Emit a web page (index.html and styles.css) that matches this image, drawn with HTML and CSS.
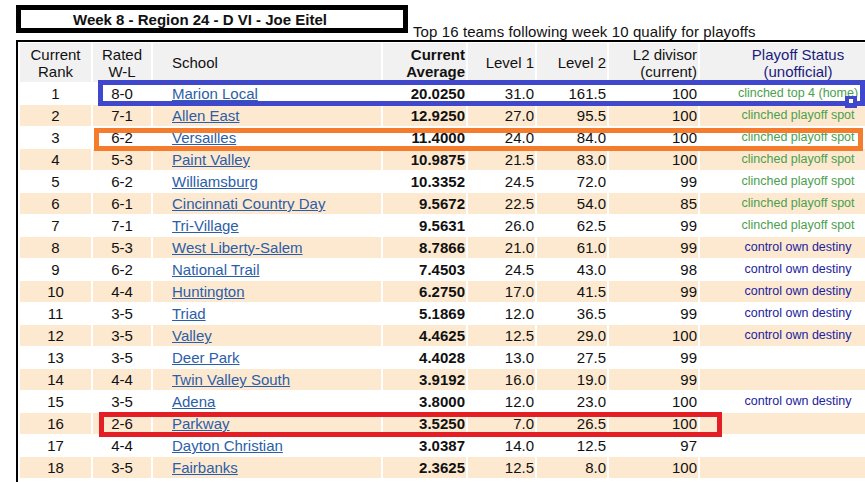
FILE: index.html
```html
<!DOCTYPE html>
<html>
<head>
<meta charset="utf-8">
<link rel="stylesheet" href="styles.css">
</head>
<body>
<div class="page">
  <div class="titlebar">
    <div class="titlebox">Week 8 - Region 24 - D VI - Joe Eitel</div>
    <div class="note">Top 16 teams following week 10 qualify for playoffs</div>
  </div>
  <table class="standings">
    <colgroup>
      <col class="c-rank"><col class="c-wl"><col class="c-school"><col class="c-avg"><col class="c-l1"><col class="c-l2"><col class="c-div"><col class="c-status">
    </colgroup>
    <thead>
      <tr>
        <th class="ctr">Current<br>Rank</th>
        <th class="ctr">Rated<br>W-L</th>
        <th class="school">School</th>
        <th class="num bold">Current<br>Average</th>
        <th class="num">Level 1</th>
        <th class="num">Level 2</th>
        <th class="num">L2 divisor<br>(current)</th>
        <th class="ctr status-head">Playoff Status<br>(unofficial)</th>
      </tr>
    </thead>
    <tbody>
      <tr><td class="ctr">1</td><td class="ctr">8-0</td><td class="school"><a href="#">Marion Local</a></td><td class="num bold">20.0250</td><td class="num">31.0</td><td class="num">161.5</td><td class="num">100</td><td class="ctr st clinch">clinched top 4 (home)</td></tr>
      <tr class="alt"><td class="ctr">2</td><td class="ctr">7-1</td><td class="school"><a href="#">Allen East</a></td><td class="num bold">12.9250</td><td class="num">27.0</td><td class="num">95.5</td><td class="num">100</td><td class="ctr st clinch">clinched playoff spot</td></tr>
      <tr><td class="ctr">3</td><td class="ctr">6-2</td><td class="school"><a href="#">Versailles</a></td><td class="num bold">11.4000</td><td class="num">24.0</td><td class="num">84.0</td><td class="num">100</td><td class="ctr st clinch">clinched playoff spot</td></tr>
      <tr class="alt"><td class="ctr">4</td><td class="ctr">5-3</td><td class="school"><a href="#">Paint Valley</a></td><td class="num bold">10.9875</td><td class="num">21.5</td><td class="num">83.0</td><td class="num">100</td><td class="ctr st clinch">clinched playoff spot</td></tr>
      <tr><td class="ctr">5</td><td class="ctr">6-2</td><td class="school"><a href="#">Williamsburg</a></td><td class="num bold">10.3352</td><td class="num">24.5</td><td class="num">72.0</td><td class="num">99</td><td class="ctr st clinch">clinched playoff spot</td></tr>
      <tr class="alt"><td class="ctr">6</td><td class="ctr">6-1</td><td class="school"><a href="#">Cincinnati Country Day</a></td><td class="num bold">9.5672</td><td class="num">22.5</td><td class="num">54.0</td><td class="num">85</td><td class="ctr st clinch">clinched playoff spot</td></tr>
      <tr><td class="ctr">7</td><td class="ctr">7-1</td><td class="school"><a href="#">Tri-Village</a></td><td class="num bold">9.5631</td><td class="num">26.0</td><td class="num">62.5</td><td class="num">99</td><td class="ctr st clinch">clinched playoff spot</td></tr>
      <tr class="alt"><td class="ctr">8</td><td class="ctr">5-3</td><td class="school"><a href="#">West Liberty-Salem</a></td><td class="num bold">8.7866</td><td class="num">21.0</td><td class="num">61.0</td><td class="num">99</td><td class="ctr st own">control own destiny</td></tr>
      <tr><td class="ctr">9</td><td class="ctr">6-2</td><td class="school"><a href="#">National Trail</a></td><td class="num bold">7.4503</td><td class="num">24.5</td><td class="num">43.0</td><td class="num">98</td><td class="ctr st own">control own destiny</td></tr>
      <tr class="alt"><td class="ctr">10</td><td class="ctr">4-4</td><td class="school"><a href="#">Huntington</a></td><td class="num bold">6.2750</td><td class="num">17.0</td><td class="num">41.5</td><td class="num">99</td><td class="ctr st own">control own destiny</td></tr>
      <tr><td class="ctr">11</td><td class="ctr">3-5</td><td class="school"><a href="#">Triad</a></td><td class="num bold">5.1869</td><td class="num">12.0</td><td class="num">36.5</td><td class="num">99</td><td class="ctr st own">control own destiny</td></tr>
      <tr class="alt"><td class="ctr">12</td><td class="ctr">3-5</td><td class="school"><a href="#">Valley</a></td><td class="num bold">4.4625</td><td class="num">12.5</td><td class="num">29.0</td><td class="num">100</td><td class="ctr st own">control own destiny</td></tr>
      <tr><td class="ctr">13</td><td class="ctr">3-5</td><td class="school"><a href="#">Deer Park</a></td><td class="num bold">4.4028</td><td class="num">13.0</td><td class="num">27.5</td><td class="num">99</td><td class="ctr st"></td></tr>
      <tr class="alt"><td class="ctr">14</td><td class="ctr">4-4</td><td class="school"><a href="#">Twin Valley South</a></td><td class="num bold">3.9192</td><td class="num">16.0</td><td class="num">19.0</td><td class="num">99</td><td class="ctr st"></td></tr>
      <tr><td class="ctr">15</td><td class="ctr">3-5</td><td class="school"><a href="#">Adena</a></td><td class="num bold">3.8000</td><td class="num">12.0</td><td class="num">23.0</td><td class="num">100</td><td class="ctr st own">control own destiny</td></tr>
      <tr class="alt"><td class="ctr">16</td><td class="ctr">2-6</td><td class="school"><a href="#">Parkway</a></td><td class="num bold">3.5250</td><td class="num">7.0</td><td class="num">26.5</td><td class="num">100</td><td class="ctr st"></td></tr>
      <tr><td class="ctr">17</td><td class="ctr">4-4</td><td class="school"><a href="#">Dayton Christian</a></td><td class="num bold">3.0387</td><td class="num">14.0</td><td class="num">12.5</td><td class="num">97</td><td class="ctr st"></td></tr>
      <tr class="alt"><td class="ctr">18</td><td class="ctr">3-5</td><td class="school"><a href="#">Fairbanks</a></td><td class="num bold">2.3625</td><td class="num">12.5</td><td class="num">8.0</td><td class="num">100</td><td class="ctr st"></td></tr>
      <tr class="spacer"><td colspan="8"></td></tr>
    </tbody>
  </table>

  <div class="mark mark-blue"></div>
  <div class="handle"></div>
  <div class="mark mark-orange"></div>
  <div class="mark mark-red"></div>
</div>
</body>
</html>
```

FILE: styles.css
```css
html, body {
  margin: 0;
  padding: 0;
  overflow: hidden;
  background: #fff;
}

.page {
  position: relative;
  width: 865px;
  height: 482px;
  overflow: hidden;
  padding-left: 16px;
  box-sizing: border-box;
  font-family: "Liberation Sans", Arial, sans-serif;
  font-size: 15px;
  color: #111;
}

.titlebar {
  display: flex;
  align-items: flex-end;
  height: 40px;
}

.titlebox {
  width: 330px;
  height: 18px;
  line-height: 19px;
  border: 5px solid #000;
  margin-bottom: 7px;
  padding-left: 52px;
  box-sizing: content-box;
  font-weight: bold;
  font-size: 15px;
  white-space: nowrap;
}

.note {
  margin-left: 5px;
  line-height: 17px;
  white-space: nowrap;
  color: #111;
  letter-spacing: 0.1px;
}

.standings {
  table-layout: fixed;
  width: 884px;
  border-collapse: separate;
  border-spacing: 2px 1px;
  border-top: 2px solid #000;
  border-left: 2px solid #000;
  border-right: 2px solid #000;
}

.c-rank { width: 71px; }
.c-wl { width: 58px; }
.c-school { width: 228px; }
.c-avg { width: 83px; }
.c-l1 { width: 67px; }
.c-l2 { width: 70px; }
.c-div { width: 89px; }
.c-status { width: 196px; }

.standings th,
.standings td {
  box-sizing: border-box;
  padding: 0 1px;
  white-space: nowrap;
  overflow: hidden;
}

.standings th {
  background: #f1f1f1;
  height: 39px;
  font-weight: normal;
  line-height: 17px;
  vertical-align: middle;
}

.standings td {
  height: 21px;
  line-height: 21px;
}

.standings tr.alt td {
  background: #fde9d0;
}

.standings tr.spacer td {
  height: 6px;
  line-height: 6px;
}

.ctr { text-align: center; }
.num { text-align: right; }
.school { text-align: left; padding-left: 19px !important; }
.standings .bold { font-weight: bold; }

.status-head { color: #1b1b7d; }

.standings a {
  color: #2c5ea8;
  text-decoration: underline;
}

.st { font-size: 12.5px; }
.clinch { color: #4aa04c; }
.own { color: #22229e; }

.mark {
  position: absolute;
  border: 5px solid;
  box-sizing: border-box;
}

.mark-blue {
  left: 98px;
  top: 80px;
  width: 767px;
  height: 26px;
  border-color: #3f48cc;
}

.handle {
  position: absolute;
  left: 845px;
  top: 96px;
  width: 12px;
  height: 12px;
  background: #3f48cc;
}

.handle::after {
  content: "";
  position: absolute;
  left: 4px;
  top: 3px;
  width: 4px;
  height: 4px;
  background: #fff;
}

.mark-orange {
  left: 94px;
  top: 128px;
  width: 769px;
  height: 23px;
  border-color: #f47c2c;
}

.mark-red {
  left: 99px;
  top: 412px;
  width: 623px;
  height: 25px;
  border-color: #e31e25;
}
```
